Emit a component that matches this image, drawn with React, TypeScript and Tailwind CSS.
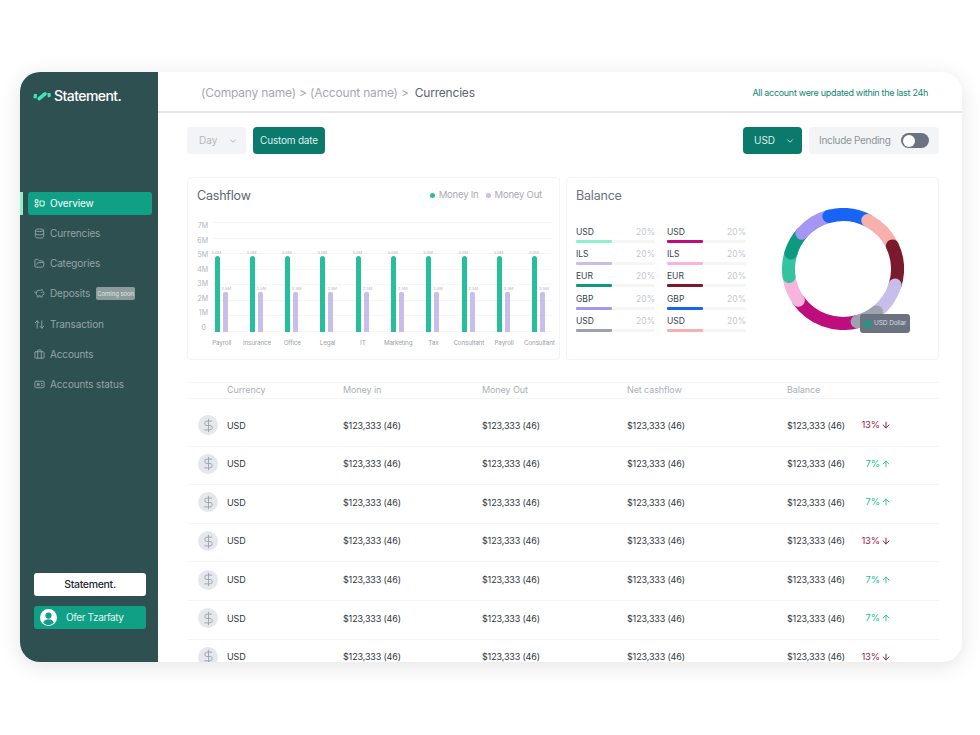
import React from "react";
import { ChevronDown, Database, FolderOpen, PiggyBank, ArrowUpDown, Briefcase, IdCard, DollarSign, ArrowUp, ArrowDown } from "lucide-react";

const navItems = [
  { label: "Currencies", Icon: Database },
  { label: "Categories", Icon: FolderOpen },
  { label: "Deposits", Icon: PiggyBank, badge: true },
  { label: "Transaction", Icon: ArrowUpDown },
  { label: "Accounts", Icon: Briefcase },
  { label: "Accounts status", Icon: IdCard },
];

const categories = ["Payroll", "Insurance", "Office", "Legal", "IT", "Marketing", "Tax", "Consultant", "Payroll", "Consultant"];
const yLabels = ["7M", "6M", "5M", "4M", "3M", "2M", "1M", "0"];

const balances = [
  [
    { c: "USD", color: "bg-[#8CF0CF]" },
    { c: "ILS", color: "bg-[#C8BDEB]" },
    { c: "EUR", color: "bg-[#0E9A80]" },
    { c: "GBP", color: "bg-[#A596F3]" },
    { c: "USD", color: "bg-[#9CA3AF]" },
  ],
  [
    { c: "USD", color: "bg-[#BE0E7D]" },
    { c: "ILS", color: "bg-[#F9B4DD]" },
    { c: "EUR", color: "bg-[#7A1A2C]" },
    { c: "GBP", color: "bg-[#1864F4]" },
    { c: "USD", color: "bg-[#F7B0AB]" },
  ],
];

const segments = [
  { from: 165, to: 235, color: "#BE0E7D" },
  { from: 235, to: 262, color: "#F9B4DD" },
  { from: 262, to: 287, color: "#34C3A0" },
  { from: 287, to: 311, color: "#0E9A80" },
  { from: 311, to: 345, color: "#A596F3" },
  { from: 345, to: 27, color: "#1864F4" },
  { from: 27, to: 65, color: "#F7B0AB" },
  { from: 65, to: 107, color: "#7A1A2C" },
  { from: 107, to: 142, color: "#C8BDEB" },
  { from: 142, to: 165, color: "#9CA3AF" },
];

function arc(from: number, to: number) {
  const r = 54.5;
  const c = 61;
  const end = to < from ? to + 360 : to;
  const p = (a: number) => {
    const t = (a * Math.PI) / 180;
    return `${(c + r * Math.sin(t)).toFixed(2)} ${(c - r * Math.cos(t)).toFixed(2)}`;
  };
  return `M ${p(from)} A ${r} ${r} 0 ${end - from > 180 ? 1 : 0} 1 ${p(end)}`;
}

const rows = [false, true, true, false, true, true, false];

function Logo() {
  return (
    <svg width="18" height="10" viewBox="0 0 18 10" className="shrink-0">
      <path d="M1 3h3l-.4 4.2H.4Z" fill="#3EE6B8" />
      <path d="M6.2 7.6 12 2.8" fill="none" stroke="#3EE6B8" strokeWidth="3.6" strokeLinecap="round" />
      <path d="M14.4 2h3l.4 3.6-3 .9Z" fill="#3EE6B8" />
    </svg>
  );
}

function OverviewIcon() {
  return (
    <svg width="11" height="9" viewBox="0 0 11 9" fill="none" stroke="#d5efe8" strokeWidth="1.2" className="shrink-0">
      <circle cx="2.6" cy="2.2" r="1.5" />
      <circle cx="2.6" cy="6.6" r="1.5" />
      <rect x="6" y="2" width="4.2" height="4.8" rx="1" />
    </svg>
  );
}

function Sidebar() {
  return (
    <aside className="relative flex w-[138px] shrink-0 flex-col bg-[#2F5051]">
      <div className="flex items-center gap-[3px] pl-[13px] pt-[15px]">
        <Logo />
        <span className="text-[14px] font-medium leading-[18px] tracking-[-0.55px] text-white">Statement.</span>
      </div>
      <nav className="mt-[87px] flex flex-col gap-[7.17px] pl-[8px] pr-[6px]">
        <div className="relative flex h-[23px] items-center gap-[5px] rounded-[3px] bg-[#10A085] pl-[6px] text-[10px] tracking-[-0.15px] text-white">
          <span className="absolute left-[-8px] top-0 h-[23px] w-[2.5px] bg-[#8CF0CF]" />
          <OverviewIcon />
          Overview
        </div>
        {navItems.map(({ label, Icon, badge }) => (
          <div key={label} className="flex h-[23px] items-center gap-[5px] pl-[6px] text-[10px] tracking-[-0.15px] text-[#93a5a5]">
            <Icon size={11} strokeWidth={2} className="shrink-0 text-[#93a5a5]" />
            {label}
            {badge && (
              <span className="ml-[1px] flex h-[13px] w-[39px] items-center justify-center whitespace-nowrap rounded-[2px] bg-[#8c9b9b] text-[6px] tracking-[-0.05px] text-[#dfe6e6]">
                Coming soon
              </span>
            )}
          </div>
        ))}
      </nav>
      <div className="mt-auto flex flex-col gap-[10px] pb-[33px] pl-[14px] pr-[12px]">
        <div className="flex h-[23px] items-center justify-center rounded-[3px] bg-white text-[10.5px] font-medium tracking-[-0.3px] text-[#1f2937]">
          Statement.
        </div>
        <div className="flex h-[23px] items-center gap-[9px] rounded-[3px] bg-[#10A085] pl-[6px] text-[10px] tracking-[-0.4px] text-[#e3f5f0]">
          <svg width="17" height="17" viewBox="0 0 17 17" className="shrink-0">
            <circle cx="8.5" cy="8.5" r="8.5" fill="#fff" />
            <circle cx="8.5" cy="6.6" r="3.1" fill="#10A085" />
            <path d="M3.2 13.6c1-2.4 3-3.4 5.3-3.4s4.3 1 5.3 3.4a6.8 6.8 0 0 1-10.6 0Z" fill="#10A085" />
          </svg>
          Ofer Tzarfaty
        </div>
      </div>
    </aside>
  );
}

function Cashflow() {
  return (
    <section className="flex h-[183px] w-[373px] shrink-0 flex-col rounded-[4px] border border-[#f3f4f6] pl-[9px] pr-[7px] pt-[9px]">
      <div className="flex items-center justify-between pr-[10px]">
        <h2 className="text-[12.5px] leading-[18px] tracking-[-0.2px] text-[#5b6570]">Cashflow</h2>
        <div className="-mt-[2px] flex items-center gap-[7px] text-[9.5px] tracking-[-0.2px] text-[#a4abb3]">
          <span className="flex items-center gap-[4px]">
            <span className="h-[5px] w-[5px] rounded-full bg-[#26BF9B]" />
            Money In
          </span>
          <span className="flex items-center gap-[4px]">
            <span className="h-[5px] w-[5px] rounded-full bg-[#C8BDEB]" />
            Money Out
          </span>
        </div>
      </div>
      <div className="mt-[17px] flex">
        <div className="-ml-[1px] flex h-[110px] w-[17px] shrink-0 flex-col justify-between text-[7px] leading-[8px] text-[#b0b5bb]">
          {yLabels.map((l) => (
            <span key={l} className="pr-[5px] text-right last:pr-[7px]">{l}</span>
          ))}
        </div>
        <div className="relative h-[110px] flex-1">
          <div className="absolute inset-0 flex flex-col justify-between">
            {yLabels.map((l) => (
              <div key={l} className="h-px w-full bg-[#f6f6f7]" />
            ))}
          </div>
          <div className="absolute inset-0 flex items-end pl-[1.5px]">
            {categories.map((c, i) => (
              <div key={i} className="flex w-[35.3px] shrink-0 items-end gap-[3px]">
                <div className="relative h-[76px] w-[5px] rounded-t-[2.5px] bg-[#26BF9B]">
                  <span className="absolute left-[-3px] top-[-6px] text-[4px] leading-[5px] text-[#b0b5bb]">5.0M</span>
                </div>
                <div className="relative h-[40px] w-[5px] rounded-t-[1.5px] bg-[#C8BDEB]">
                  <span className="absolute left-[-1px] top-[-6px] text-[4px] leading-[5px] text-[#b0b5bb]">2.5M</span>
                </div>
              </div>
            ))}
          </div>
        </div>
      </div>
      <div className="ml-[7px] mt-[7px] flex">
        {categories.map((c, i) => (
          <span key={i} className="w-[35.3px] shrink-0 whitespace-nowrap text-center text-[6.3px] leading-[9px] tracking-[-0.15px] text-[#9aa1a9]">{c}</span>
        ))}
      </div>
    </section>
  );
}

function Balance() {
  return (
    <section className="relative flex h-[183px] flex-1 flex-col rounded-[4px] border border-[#f3f4f6] pl-[9px] pt-[9px]">
      <h2 className="text-[12.5px] leading-[18px] tracking-[-0.2px] text-[#6b7280]">Balance</h2>
      <div className="flex">
        <div className="mt-[21px] flex gap-[12px]">
          {balances.map((col, i) => (
            <div key={i} className="flex w-[79px] flex-col gap-[5.2px]">
              {col.map((b, j) => (
                <div key={j}>
                  <div className="flex items-center justify-between text-[8.5px] leading-[12px]">
                    <span className="text-[#374151]">{b.c}</span>
                    <span className="text-[#c3c7cc]">20%</span>
                  </div>
                  <div className="mt-[2px] h-[3px] rounded-full bg-[#f5f5f6]">
                    <div className={`h-[3px] w-[36px] rounded-[1px] ${b.color}`} />
                  </div>
                </div>
              ))}
            </div>
          ))}
        </div>
        <svg width="122" height="122" viewBox="0 0 122 122" className="ml-[36px] mt-[3px] shrink-0">
          {segments.map((s, i) => (
            <path key={i} d={arc(s.from, s.to)} fill="none" stroke={s.color} strokeWidth="13" strokeLinecap="round" />
          ))}
        </svg>
      </div>
      <div className="absolute left-[293px] top-[136px] flex h-[19px] w-[50px] items-center gap-[3px] rounded-[3px] bg-[#6B7280] pl-[5px] text-[6.5px] tracking-[-0.1px] text-[#d9dce0]">
        <span className="h-[6px] w-[6px] shrink-0 bg-[#10A085]" />
        USD Dollar
      </div>
    </section>
  );
}

const gridCols = "grid grid-cols-[40px_116px_139px_145px_160px_76px_76px]";

function Table() {
  return (
    <div className="mt-[22px] flex-1">
      <div className={`${gridCols} h-[17px] items-center border-y border-[#f5f5f6] pb-[2px] text-[9px] tracking-[-0.1px] text-[#a9afb6]`}>
        <span />
        <span>Currency</span>
        <span>Money in</span>
        <span>Money Out</span>
        <span>Net cashflow</span>
        <span>Balance</span>
        <span />
      </div>
      <div className="mt-[9px]">
        {rows.map((up, i) => (
          <div key={i} className={`${gridCols} h-[38.6px] items-center border-b border-[#f5f5f6] pb-[3px] text-[9px] tracking-[-0.15px] text-[#2f3640]`}>
            <span className="ml-[11px] flex h-[20px] w-[20px] items-center justify-center rounded-full bg-[#e5e7eb]">
              <DollarSign size={15} strokeWidth={1.5} className="text-[#9ca3af]" />
            </span>
            <span>USD</span>
            <span>$123,333 (46)</span>
            <span>$123,333 (46)</span>
            <span>$123,333 (46)</span>
            <span>$123,333 (46)</span>
            {up ? (
              <span className="flex w-[28px] items-center justify-end gap-[1px] text-[9.5px] text-[#26BF9B]">
                7%
                <ArrowUp size={10} strokeWidth={2.2} className="shrink-0" />
              </span>
            ) : (
              <span className="flex w-[28px] items-center justify-end gap-[1px] text-[9.5px] text-[#9b2742]">
                13%
                <ArrowDown size={10} strokeWidth={2.2} className="shrink-0 text-[#7A1A2C]" />
              </span>
            )}
          </div>
        ))}
      </div>
    </div>
  );
}

function Main() {
  return (
    <main className="flex min-w-0 flex-1 flex-col">
      <header className="flex h-[41px] shrink-0 items-center justify-between border-b-2 border-[#e3e5e8] pl-[43px] pr-[34px] pt-[3px]">
        <div className="text-[12px] tracking-[-0.2px] text-[#a3a9b0]">
          (Company name) &gt; (Account name) &gt;
          <span className="ml-[6px] text-[#5b6570]">Currencies</span>
        </div>
        <div className="text-[9px] tracking-[-0.3px] text-[#12866f]">All account were updated within the last 24h</div>
      </header>
      <div className="flex min-h-0 flex-1 flex-col pl-[29px] pr-[23px] pt-[14px]">
        <div className="flex h-[27px] shrink-0 items-center justify-between">
          <div className="flex gap-[7px]">
            <div className="flex h-[27px] w-[59px] items-center gap-[11px] rounded-[4px] bg-[#f3f4f6] pl-[12px] text-[10px] text-[#b2b7bd]">
              Day
              <ChevronDown size={10} strokeWidth={1.8} className="shrink-0 text-[#9ca3af]" />
            </div>
            <div className="flex h-[27px] w-[72px] items-center justify-center rounded-[4px] bg-[#0B7A6C] text-[10px] tracking-[-0.2px] text-[#dcefeb]">
              Custom date
            </div>
          </div>
          <div className="flex gap-[7px]">
            <div className="flex h-[27px] w-[59px] items-center gap-[10px] rounded-[4px] bg-[#0B7A6C] pl-[11px] text-[10px] text-[#dcefeb]">
              USD
              <ChevronDown size={10} strokeWidth={2} className="shrink-0" />
            </div>
            <div className="flex h-[27px] w-[130px] items-center justify-between rounded-[4px] bg-[#f3f4f6] pl-[10px] pr-[10px] text-[10px] tracking-[-0.3px] text-[#8d949c]">
              Include Pending
              <span className="flex h-[15px] w-[28px] items-center rounded-full bg-[#6B7280] pl-[1.5px]">
                <span className="h-[12px] w-[12px] rounded-full bg-white" />
              </span>
            </div>
          </div>
        </div>
        <div className="mt-[23px] flex shrink-0 gap-[6px]">
          <Cashflow />
          <Balance />
        </div>
        <Table />
      </div>
    </main>
  );
}

export default function App() {
  return (
    <div className="h-[735px] w-[980px] overflow-hidden bg-white pl-[20px] pt-[72px] font-['Inter','Liberation_Sans',sans-serif]">
      <div className="flex h-[590px] w-[942px] overflow-hidden rounded-[20px] bg-white shadow-[0_4px_22px_rgba(0,0,0,0.11)]">
        <Sidebar />
        <Main />
      </div>
    </div>
  );
}
